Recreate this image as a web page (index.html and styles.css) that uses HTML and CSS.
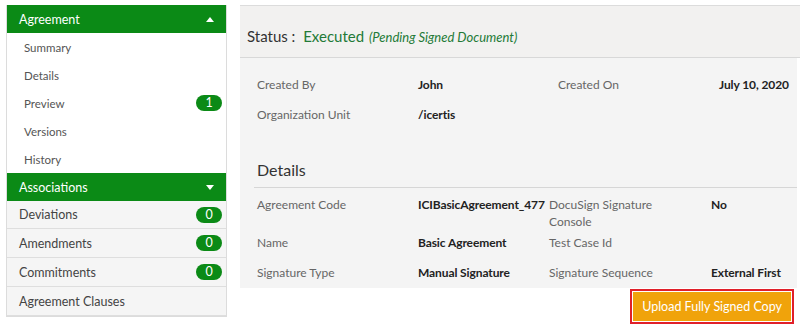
FILE: index.html
```html
<!DOCTYPE html>
<html lang="en">

<head>
    <meta charset="UTF-8">
    <title>Agreement Details</title>
    <link rel="stylesheet" href="styles.css">
</head>

<body>
    <div class="page">
        <div class="side-nav">
            <div class="nav-head">
                <span>Agreement</span>
                <svg class="caret" width="8" height="5" viewBox="0 0 8 5"><path d="M0 5 L4 0 L8 5 Z" fill="#fff"/></svg>
            </div>
            <ul class="nav-list">
                <li>Summary</li>
                <li>Details</li>
                <li>Preview <span class="badge">1</span></li>
                <li>Versions</li>
                <li>History</li>
            </ul>
            <div class="nav-head">
                <span>Associations</span>
                <svg class="caret" width="8" height="5" viewBox="0 0 8 5"><path d="M0 0 L8 0 L4 5 Z" fill="#fff"/></svg>
            </div>
            <ul class="assoc-list">
                <li>Deviations <span class="badge">0</span></li>
                <li>Amendments <span class="badge">0</span></li>
                <li>Commitments <span class="badge">0</span></li>
                <li>Agreement Clauses</li>
            </ul>
        </div>

        <div class="main">
            <div class="status-bar">
                Status :
                <span class="status-value">Executed</span>
                <span class="status-note">(Pending Signed Document)</span>
            </div>
            <div class="content">
                <div class="info-grid top-grid">
                    <div class="label">Created By</div>
                    <div class="value">John</div>
                    <div class="label">Created On</div>
                    <div class="value">July 10, 2020</div>
                    <div class="label">Organization Unit</div>
                    <div class="value">/icertis</div>
                    <div class="label"></div>
                    <div class="value"></div>
                </div>

                <h3 class="section-title">Details</h3>
                <div class="info-grid detail-grid">
                    <div class="label">Agreement Code</div>
                    <div class="value">ICIBasicAgreement_477</div>
                    <div class="label">DocuSign Signature<br>Console</div>
                    <div class="value">No</div>
                    <div class="label">Name</div>
                    <div class="value">Basic Agreement</div>
                    <div class="label">Test Case Id</div>
                    <div class="value"></div>
                    <div class="label">Signature Type</div>
                    <div class="value">Manual Signature</div>
                    <div class="label">Signature Sequence</div>
                    <div class="value">External First</div>
                </div>
            </div>
            <div class="actions">
                <div class="highlight">
                    <button type="button" class="upload-btn">Upload Fully Signed Copy</button>
                </div>
            </div>
        </div>
    </div>
</body>

</html>
```

FILE: styles.css
```css
body {
    font-family: Lato, "Open Sans", sans-serif;
    background-color: #fff;
    margin: 0;
    padding: 0;
    width: 800px;
    height: 325px;
    overflow: hidden;
}

.page {
    display: flex;
    align-items: flex-start;
    padding-top: 5px;
}

.side-nav {
    width: 219px;
    margin-left: 6px;
    border: 1px solid #dcdcdc;
    border-top: none;
    height: 311px;
    flex-shrink: 0;
}

.nav-head {
    display: flex;
    justify-content: space-between;
    align-items: center;
    height: 28px;
    padding: 0 12px 0 12px;
    background-color: #0b8a16;
    color: #fff;
    font-size: 12.5px;
}

.nav-list,
.assoc-list {
    list-style: none;
    margin: 0;
    padding: 0;
}

.nav-list li {
    display: flex;
    justify-content: space-between;
    align-items: center;
    height: 28px;
    padding: 0 4px 0 17px;
    font-size: 11.5px;
    color: #555;
}

.assoc-list li {
    display: flex;
    justify-content: space-between;
    align-items: center;
    height: 28px;
    padding: 0 4px 0 12px;
    background-color: #f5f5f5;
    border-bottom: 1px solid #dedede;
    font-size: 12.5px;
    color: #444;
}

.assoc-list li:first-child {
    height: 27px;
}

.badge {
    display: inline-block;
    width: 26px;
    height: 16px;
    line-height: 16px;
    border-radius: 8px;
    background-color: #0b8a16;
    color: #fff;
    text-align: center;
    font-size: 12.5px;
}

.main {
    margin-left: 13px;
    flex: 1;
}

.status-bar {
    height: 32px;
    padding: 19px 0 0 7px;
    background-color: #f2f1f0;
    border-top: 1px solid #dcdcdc;
    border-bottom: 1px solid #d8d8d8;
    font-size: 15px;
    line-height: 22px;
    color: #333;
    white-space: nowrap;
}

.status-value {
    color: #237a37;
    margin-left: 4px;
}

.status-note {
    color: #237a37;
    font-style: italic;
    font-size: 13px;
    margin-left: 1px;
}

.content {
    height: 212px;
    margin-right: 3px;
    padding: 18px 0 0 17px;
    background-color: #f4f4f4;
    overflow: hidden;
}

.info-grid {
    display: grid;
    grid-auto-rows: minmax(26px, auto);
    row-gap: 4px;
    font-size: 12px;
    line-height: 17px;
}

.top-grid {
    grid-template-columns: 161px 140px 161px auto;
}

.detail-grid {
    grid-template-columns: 161px 131px 162px auto;
}

.label {
    color: #666;
}

.value {
    color: #222;
    font-weight: bold;
    letter-spacing: -0.1px;
    white-space: nowrap;
}

.section-title {
    margin: 27px 0 8px -3px;
    padding: 0 0 6px 3px;
    border-bottom: 1px solid #d6d6d6;
    font-size: 16px;
    font-weight: normal;
    line-height: 22px;
    color: #333;
}

.actions {
    display: flex;
    justify-content: flex-end;
    padding: 1px 6px 0 0;
}

.highlight {
    border: 2px solid #e0202a;
    padding: 1px;
}

.upload-btn {
    display: block;
    height: 29px;
    padding: 0 9px;
    border: none;
    background-color: #f0a30b;
    color: #fff;
    font-family: Lato, "Open Sans", sans-serif;
    font-size: 12.5px;
    cursor: pointer;
}
```
